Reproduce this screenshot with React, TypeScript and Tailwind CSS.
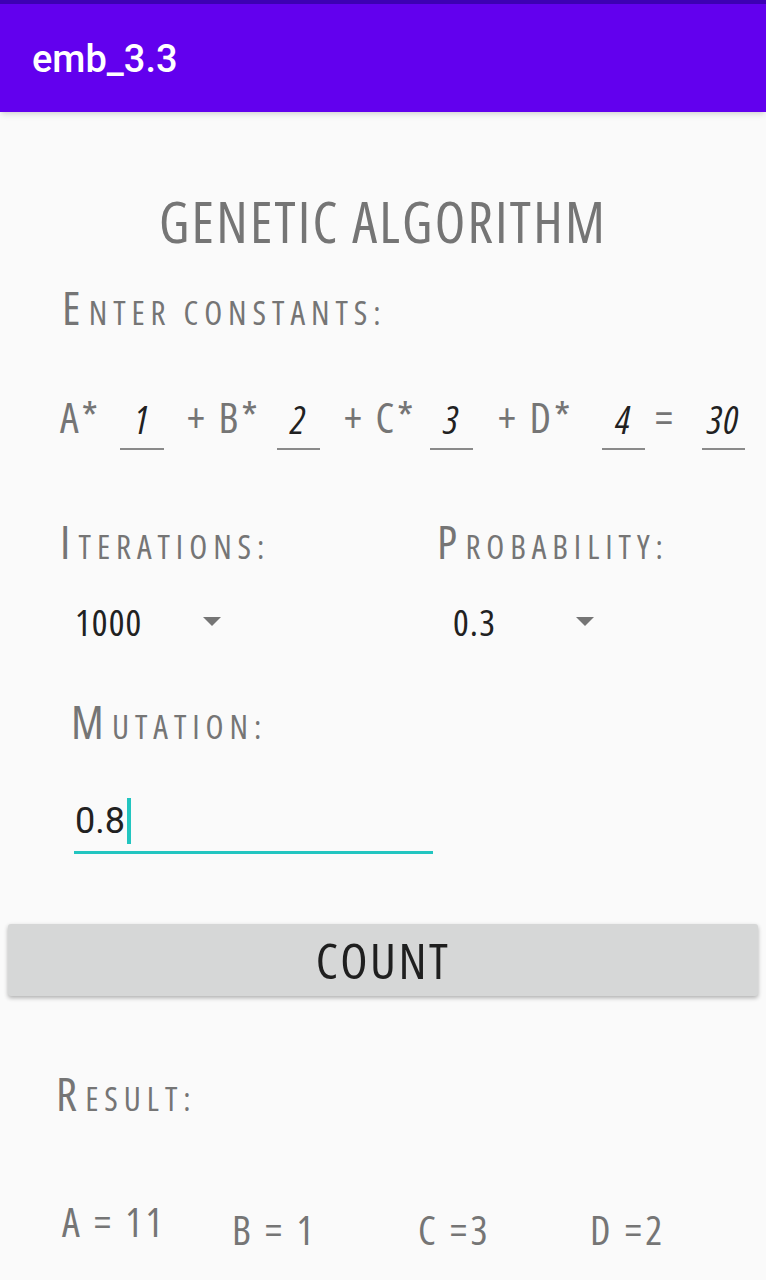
const narrow = "font-['Open_Sans','DejaVu_Sans',sans-serif] [font-stretch:75%]";

function Field({ value, w }: { value: string; w: string }) {
  return (
    <div className={`${w} flex flex-col items-center`}>
      <span className={`${narrow} italic text-[38px] leading-none text-[#212121] tracking-[0.04em]`}>{value}</span>
      <div className="mt-[10px] h-[2px] w-full bg-[#8a8a8a]" />
    </div>
  );
}

function Caret() {
  return (
    <svg width="18" height="10" viewBox="0 0 18 10">
      <path d="M0 0 L18 0 L9 9 Z" fill="#757575" />
    </svg>
  );
}

// small-caps label: first letter full size, the rest as smaller capitals
function Label({ first, rest }: { first: string; rest: string }) {
  return (
    <span className={`${narrow} text-[#757575] leading-none`}>
      <span className="text-[46px] tracking-[0.18em]">{first}</span>
      <span className="text-[33px] tracking-[0.18em]">{rest}</span>
    </span>
  );
}

export default function App() {
  return (
    <div className="min-h-[1280px] w-[766px] bg-[#fafafa] overflow-hidden">
      {/* toolbar */}
      <div className="h-[112px] border-t-4 border-[#3d00b3] bg-[#6200ee] shadow-md flex items-center pl-[32px]">
        <span className="font-['Roboto',sans-serif] font-medium text-[38px] text-white pt-[2px]">emb_3.3</span>
      </div>

      <div className="flex flex-col">
        <div className={`${narrow} mt-[78px] h-[62px] flex items-center justify-center text-[56px] font-medium text-[#757575] tracking-[0.04em]`}>
          GENETIC ALGORITHM
        </div>

        <div className="mt-[30px] h-[50px] flex items-center pl-[62px]">
          <Label first="E" rest="NTER CONSTANTS:" />
        </div>

        {/* equation */}
        <div className={`${narrow} mt-[64px] flex items-end text-[42px] leading-none text-[#757575] tracking-[0.07em]`}>
          <span className="ml-[60px] w-[60px] pb-[12px]">A*</span>
          <Field value="1" w="w-[44px]" />
          <span className="ml-[23px] w-[90px] pb-[12px]">+ B*</span>
          <Field value="2" w="w-[43px]" />
          <span className="ml-[24px] w-[86px] pb-[12px]">+ C*</span>
          <Field value="3" w="w-[43px]" />
          <span className="ml-[25px] w-[104px] pb-[12px]">+ D*</span>
          <Field value="4" w="w-[43px]" />
          <span className="w-[57px] pl-[10px] pb-[12px]">=</span>
          <Field value="30" w="w-[43px]" />
        </div>

        <div className="mt-[66px] h-[50px] flex items-center">
          <span className="ml-[60px] w-[377px]">
            <Label first="I" rest="TERATIONS:" />
          </span>
          <Label first="P" rest="ROBABILITY:" />
        </div>

        <div className={`${narrow} mt-[33px] h-[45px] flex items-center text-[37px] text-[#212121] tracking-[0.03em]`}>
          <span className="ml-[75px] w-[128px]">1000</span>
          <Caret />
          <span className="ml-[232px] w-[123px]">0.3</span>
          <Caret />
        </div>

        <div className="mt-[52px] h-[50px] flex items-center pl-[71px]">
          <Label first="M" rest="UTATION:" />
        </div>

        {/* mutation input */}
        <div className="mt-[48px] ml-[74px] w-[359px] h-[60px] flex flex-col justify-end">
          <div className="flex items-center h-[48px]">
            <span className="font-['Roboto',sans-serif] text-[36px] text-[#212121] leading-none pl-[1px]">0.8</span>
            <span className="ml-[2px] w-[4px] h-[46px] bg-[#22c5c0]" />
          </div>
          <div className="mt-[6px] h-[3px] w-full bg-[#22c5c0]" />
        </div>

        {/* button */}
        <button className={`${narrow} mt-[70px] mx-[8px] h-[72px] rounded-[3px] bg-[#d6d7d7] shadow-[0_2px_4px_rgba(0,0,0,0.3)] text-[#1f1f1f] text-[50px] font-medium tracking-[0.05em] flex items-center justify-center`}>
          COUNT
        </button>

        <div className="mt-[72px] h-[50px] flex items-center pl-[56px]">
          <Label first="R" rest="ESULT:" />
        </div>

        <div className={`${narrow} mt-[74px] flex items-start text-[40px] text-[#757575] tracking-[0.085em]`}>
          <span className="ml-[62px] w-[170px]">A = 11</span>
          <span className="mt-[8px] w-[186px]">B = 1</span>
          <span className="mt-[8px] w-[172px]">C =3</span>
          <span className="mt-[8px]">D =2</span>
        </div>
      </div>
    </div>
  );
}
